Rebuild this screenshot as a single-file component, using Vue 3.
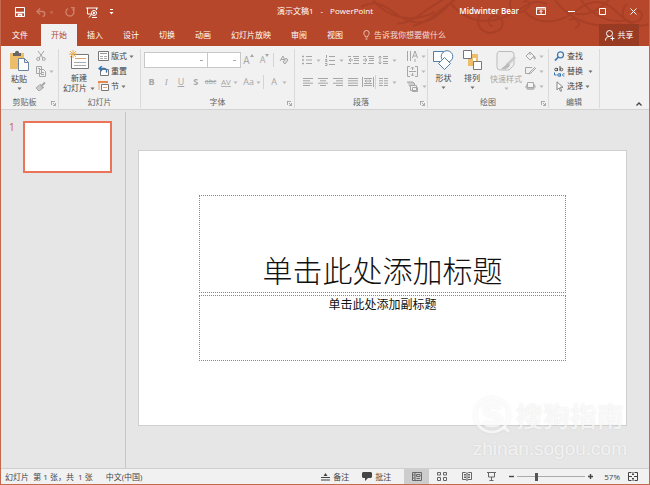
<template>
  <div class="app-window">
    <header class="header">
      <svg class="swirls" width="290" height="46" viewBox="0 0 290 46" fill="none" stroke="#a84027" stroke-width="2" aria-hidden="true">
        <path d="M2 7c22-12 30 8 48 14s34-8 44-21M14 0c12 14 34 26 62 12M38 24C58 22 66 8 84 0M54 26C72 22 84 6 96 0M92 4c14 16 34 22 56 12s24-18 40-12" />
        <path d="M124 10c-12 14 0 26 12 22s8-16 0-16-8 10-2 10M152 0c-4 10 6 16 14 10s4-10-2-8M166 12c14 14 34 12 52-2s30-8 42 4 20 14 30 10" />
        <path d="M196 0c14 20 40 30 66 24M222 0c10 14 26 24 48 20M210 20c8-4 14 6 6 8M250 0c-8 8-18 16-34 14M268 4c-8 8-4 18 6 18s12-10 4-12" />
      </svg>
      <div class="title-bar">
        <div class="quick-access">
          <button title="保存"><Icon name="save" /></button>
          <button class="dim undo" title="撤消"><Icon name="undo" /><Icon name="arrow" /></button>
          <button class="dim" title="重复"><Icon name="redo" /></button>
          <button title="从头开始"><Icon name="present" /></button>
          <button title="自定义快速访问工具栏"><Icon name="more" /></button>
        </div>
        <div class="doc-title"><span>演示文稿1</span><span>-</span><span>PowerPoint</span></div>
        <div class="window-tools">
          <span class="user">Midwinter Bear</span>
          <button class="display" title="功能区显示选项"><Icon name="ribbon" /></button>
          <button title="最小化"><Icon name="minimize" /></button>
          <button title="最大化"><Icon name="maximize" /></button>
          <button title="关闭"><Icon name="close" /></button>
        </div>
      </div>
      <nav class="tabs">
        <button
          v-for="tab in tabs"
          :key="tab"
          class="tab"
          :class="{ active: tab === activeTab }"
          @click="activeTab = tab"
        >
          {{ tab }}
        </button>
        <button class="tell-me"><Icon name="bulb" />告诉我你想要做什么</button>
        <button class="share"><Icon name="person" />共享</button>
      </nav>
    </header>

    <section class="ribbon">
      <div class="group clipboard">
        <div class="tools">
          <button class="big"><Icon name="paste" />粘贴<Icon name="arrow" /></button>
          <div class="stack off">
            <button title="剪切"><Icon name="cut" /></button>
            <button title="复制"><Icon name="copy" /><Icon name="arrow" /></button>
            <button title="格式刷"><Icon name="brush" /></button>
          </div>
        </div>
        <div class="caption">剪贴板<Icon name="launcher" class="launcher" /></div>
      </div>

      <div class="group slides">
        <div class="tools">
          <button class="big">
            <Icon name="newSlide" />新建
            <span class="line">幻灯片<Icon name="arrow" /></span>
          </button>
          <div class="stack">
            <button><Icon name="layout" />版式<Icon name="arrow" /></button>
            <button><Icon name="reset" />重置</button>
            <button><Icon name="section" />节<Icon name="arrow" /></button>
          </div>
        </div>
        <div class="caption">幻灯片</div>
      </div>

      <div class="group font">
        <div class="tools rows off">
          <div class="row">
            <select class="font-name" aria-label="字体"></select>
            <select class="font-size" aria-label="字号"></select>
            <button class="letter grow" title="增大字号">A<Icon name="up" /></button>
            <button class="letter shrink" title="减小字号">A<Icon name="down" /></button>
            <i class="divider"></i>
            <button class="clear" title="清除格式"><Icon name="eraser" /></button>
          </div>
          <div class="row">
            <button class="letter" title="加粗"><b>B</b></button>
            <button class="letter serif" title="倾斜"><em>I</em></button>
            <button class="letter" title="下划线"><u>U</u></button>
            <button class="letter" title="文字阴影"><b>S</b></button>
            <button class="letter small" title="删除线"><s>abc</s></button>
            <button class="letter wide" title="字符间距"><span class="spacing">AV</span><Icon name="arrow" /></button>
            <button class="letter wide" title="更改大小写">Aa<Icon name="arrow" /></button>
            <i class="divider"></i>
            <button class="letter color" title="字体颜色">A<Icon name="arrow" /></button>
          </div>
        </div>
        <div class="caption">字体<Icon name="launcher" class="launcher" /></div>
      </div>

      <div class="group paragraph">
        <div class="tools off">
          <div class="rows">
            <div class="row">
              <button class="drop" title="项目符号"><Icon name="bullets" /><Icon name="arrow" /></button>
              <button class="drop" title="编号"><Icon name="numbers" /><Icon name="arrow" /></button>
              <button class="plain" title="降低列表级别"><Icon name="outdent" /></button>
              <button class="plain" title="提高列表级别"><Icon name="indent" /></button>
              <button class="drop" title="行距"><Icon name="lineSpacing" /><Icon name="arrow" /></button>
            </div>
            <div class="row">
              <button class="plain" title="左对齐"><Icon name="left" /></button>
              <button class="plain" title="居中"><Icon name="center" /></button>
              <button class="plain" title="右对齐"><Icon name="right" /></button>
              <button class="plain" title="两端对齐"><Icon name="justify" /></button>
              <button class="plain" title="分散对齐"><Icon name="distribute" /></button>
              <i class="divider"></i>
              <button class="drop" title="分栏"><Icon name="columns" /><Icon name="arrow" /></button>
            </div>
          </div>
          <div class="stack">
            <button title="文字方向"><Icon name="direction" /><Icon name="arrow" /></button>
            <button title="对齐文本"><Icon name="alignText" /><Icon name="arrow" /></button>
            <button title="转换为 SmartArt"><Icon name="smartArt" /><Icon name="arrow" /></button>
          </div>
        </div>
        <div class="caption">段落<Icon name="launcher" class="launcher" /></div>
      </div>

      <div class="group drawing">
        <div class="tools">
          <button class="big"><Icon name="shapes" />形状<Icon name="arrow" /></button>
          <button class="big"><Icon name="arrange" />排列<Icon name="arrow" /></button>
          <button class="big off"><Icon name="styles" />快速样式<Icon name="arrow" /></button>
          <div class="stack off">
            <button title="形状填充"><Icon name="fill" /><Icon name="arrow" /></button>
            <button title="形状轮廓"><Icon name="outline" /><Icon name="arrow" /></button>
            <button title="形状效果"><Icon name="effects" /><Icon name="arrow" /></button>
          </div>
        </div>
        <div class="caption">绘图<Icon name="launcher" class="launcher" /></div>
      </div>

      <div class="group editing">
        <div class="tools">
          <div class="stack">
            <button><Icon name="find" />查找</button>
            <button><Icon name="replace" />替换<Icon name="arrow" class="far" /></button>
            <button><Icon name="select" />选择<Icon name="arrow" /></button>
          </div>
        </div>
        <div class="caption">编辑</div>
      </div>
      <button class="collapse" title="折叠功能区"><Icon name="collapse" /></button>
    </section>

    <main class="workspace">
      <aside class="thumbnails">
        <span class="number">1</span>
        <button class="thumb" title="幻灯片 1"></button>
      </aside>
      <div class="stage">
        <div class="slide">
          <h1 class="placeholder title">单击此处添加标题</h1>
          <p class="placeholder subtitle">单击此处添加副标题</p>
        </div>
        <div class="watermark">
          <div class="brand"><Icon name="sogou" />搜狗指南</div>
          <div class="site">zhinan.sogou.com</div>
        </div>
      </div>
    </main>

    <footer class="status-bar">
      <span>幻灯片&nbsp; 第 1 张，共&nbsp; 1 张</span>
      <span class="language">中文(中国)</span>
      <div class="status-tools">
        <button class="note"><Icon name="notes" />备注</button>
        <button class="note"><Icon name="comment" />批注</button>
        <button
          v-for="view in views"
          :key="view.icon"
          class="view"
          :class="{ current: view.icon === currentView }"
          :title="view.label"
          @click="currentView = view.icon"
        >
          <Icon :name="view.icon" />
        </button>
        <div class="zoom">
          <button title="缩小" @click="zoom--"><Icon name="minus" /></button>
          <input v-model.number="zoom" type="range" min="10" max="180" aria-label="缩放">
          <button title="放大" @click="zoom++"><Icon name="plus" /></button>
        </div>
        <span class="percent">{{ zoom }}%</span>
        <button class="fit" title="使幻灯片适应当前窗口"><Icon name="fit" /></button>
      </div>
    </footer>
  </div>
</template>

<script setup>
import { h, ref } from 'vue';

const tabs = ['文件', '开始', '插入', '设计', '切换', '动画', '幻灯片放映', '审阅', '视图'];
const activeTab = ref('开始');

const views = [
  { icon: 'normal', label: '普通视图' },
  { icon: 'sorter', label: '幻灯片浏览' },
  { icon: 'reading', label: '阅读视图' },
  { icon: 'show', label: '幻灯片放映' }
];
const currentView = ref('normal');
const zoom = ref(57);

// name: [width, height, svg content]
const icons = {
  arrow: [5, 3, '<path d="M.5.5h4L2.500 3z" fill="currentColor" stroke="none" opacity=".75"/>'],
  up: [5, 4, '<path d="M0 3l2-3 2 3z" fill="currentColor" stroke="none"/>'],
  down: [5, 4, '<path d="M0 0h4L2 3z" fill="currentColor" stroke="none"/>'],
  save: [10, 10, '<path d="M.5.5h9v9h-9z"/><path d="M1 5.500h8M3.500 9V7.500h3V9" stroke-width="1.500"/>'],
  undo: [10, 9, '<path d="M4 .5L1 3.500l3 3M1 3.500h5.500c3 0 3 5 0 5" stroke-width="1.400"/>'],
  redo: [10, 10, '<path d="M3 1.500A4 4 0 1 0 7.500 2M6 .5h3v3" stroke-width="1.400"/>'],
  present: [12, 11, '<path d="M0 1h12M1.500 1v6h4M10.500 1v2M3 10.500l2.500-3"/><circle cx="8" cy="6" r="2.500"/><path d="M7.500 5v2l1.500-1zM6 10.500h5"/>'],
  more: [5, 6, '<path d="M1 .5h3"/><path d="M.5 3h4L2.500 5.500z" fill="currentColor" stroke="none"/>'],
  ribbon: [10, 8, '<path d="M.5.5h9v7h-9zM.5 2h9M5 7V3.500M3.500 5L5 3.500 6.500 5"/>'],
  minimize: [7, 7, '<path d="M0 3.500h7"/>'],
  maximize: [7, 7, '<path d="M.5.5h6v6h-6z"/>'],
  close: [7, 7, '<path d="M.5.5l6 6M6.500.5l-6 6"/>'],
  bulb: [7, 10, '<path d="M2.500 7C2.500 5.500.8 5 .8 3.200a2.700 2.700 0 0 1 5.400 0C6.200 5 4.500 5.500 4.500 7zM2.500 9h2" stroke-width=".8"/>'],
  person: [10, 11, '<circle cx="4.500" cy="3.500" r="3"/><path d="M.5 10.500C.5 8 2 6.500 4.500 6.500M7.500 6.500v4M5.500 8.500h4"/>'],
  paste: [20, 21, '<path d="M1 3h14v16H1z" fill="#edbd69" stroke="none"/><path d="M4 3h2c0-3 4-3 4 0h2v3H4z" fill="#666" stroke="none"/><path d="M9.500 8.500h6l4 4v8h-10zM15.500 8.500v4h4" fill="#fff" stroke="#6c86a0"/>'],
  cut: [10, 10, '<path d="M2 0l5 7M8 0L3 7"/><circle cx="2.200" cy="8" r="1.500"/><circle cx="7.800" cy="8" r="1.500"/>'],
  copy: [10, 11, '<path d="M.5.5h5v7h-5zM3.500 3.500h4l2 2v5h-6zM5 6.500h3M5 8.500h3M2 2.500h2" fill="#f1f1f1"/>'],
  brush: [10, 9, '<path d="M9 .5L6 3.500" stroke-width="2"/><path d="M4 2l4 4M3.500 3L0 6l3 3 4-3z" fill="#ccc"/>'],
  newSlide: [20, 20, '<path d="M2.500 4.500h17v14h-17z" fill="#fff" stroke="#777"/><path d="M6 8.500h11" stroke="#e0a070"/><path d="M5 12.500h12M5 15.500h12" stroke="#aaa"/><path d="M4 0v8M0 4h8M1 1l6 6M7 1L1 7" stroke="#edae55"/>'],
  layout: [11, 10, '<path d="M.5.5h10v9H.5z" fill="#fff" stroke="#777"/><path d="M2 2.500h7" stroke="#999"/><path d="M2 5.500h3M6 5.500h3M2 7.500h3M6 7.500h3" stroke="#aaa"/>'],
  reset: [11, 10, '<path d="M2.500 3.500h8v6h-8z" fill="#fff" stroke="#777"/><path d="M4 0L1 2.500 4 5M1 2.500h5c3 0 3 3 2 4" stroke="#3674ae" stroke-width="1.300"/>'],
  section: [11, 10, '<path d="M0 1h10" stroke="#e58a4c" stroke-width="2"/><path d="M3.500 3.500h7v6h-7z" fill="#fff" stroke="#777"/><path d="M1 2v7M5 6.500h4" stroke="#e2a777"/>'],
  eraser: [10, 11, '<path d="M1 6l3-5 2 5M2 4.500h3"/><path d="M4 7l3-4 2 2-3 4z" fill="#ddd"/>'],
  bullets: [10, 10, '<path d="M0 1.500h2M0 5h2M0 8.500h2" stroke-width="1.500"/><path d="M4 1.500h6M4 5h6M4 8.500h6"/>'],
  numbers: [10, 11, '<path d="M1.500 0v3M0 4.500h2L.5 6.500h2M0 8.500h2v2H0"/><path d="M4 1.500h6M4 5.500h6M4 9.500h6"/>'],
  outdent: [11, 8, '<path d="M0 .5h3M5 .5h6M6 2.500h5M6 4.500h5M0 7.500h3M5 7.500h6M5 4H1M3 2L1 4l2 2"/>'],
  indent: [11, 8, '<path d="M0 .5h3M5 .5h6M6 2.500h5M6 4.500h5M0 7.500h3M5 7.500h6M0 4h4M2 2l2 2-2 2"/>'],
  lineSpacing: [10, 10, '<path d="M2 1v8M.5 2.500L2 1l1.500 1.500M.5 7.500L2 9l1.500-1.500M5 1.500h5M5 3.500h5M5 6.500h5M5 8.500h5"/>'],
  left: [10, 8, '<path d="M0 .5h10M0 2.800h7M0 5.200h10M0 7.500h7"/>'],
  center: [10, 8, '<path d="M0 .5h10M2 2.800h6M0 5.200h10M2 7.500h6"/>'],
  right: [10, 8, '<path d="M0 .5h10M3 2.800h7M0 5.200h10M3 7.500h7"/>'],
  justify: [10, 8, '<path d="M0 .5h10M0 2.800h10M0 5.200h10M0 7.500h10"/>'],
  distribute: [12, 10, '<path d="M.5 0v10M11.500 0v10M2 1.500h8M2 8.500h8M2 6.500h8M3 4h6M4.500 2.500L3 4l1.500 1.500M7.500 2.500L9 4 7.500 5.500"/>'],
  columns: [9, 8, '<path d="M0 .5h4M5 .5h4M0 2.800h4M5 2.800h4M0 5.200h4M5 5.200h4M0 7.500h4M5 7.500h4"/>'],
  direction: [11, 11, '<path d="M.5 0v10M3.500 0v10M5.500 7L8 0l2.500 7M6.500 5h3M8 8v3"/>'],
  alignText: [11, 11, '<path d="M3 .5H.5v10H3M8 .5h2.500v10H8M2 5.500h7M5.500 1v3M4 2.500L5.500 1 7 2.500M5.500 7v3M4 8.500L5.500 10 7 8.500"/>'],
  smartArt: [12, 11, '<path d="M0 1h6l2 2-2 2H2" fill="#ccc"/><path d="M3.500 4.500h6v5h-6zM5.500 6.500h5v4h-5z" fill="#f1f1f1"/>'],
  shapes: [21, 20, '<path d="M.5 1.500h10v10H.5z" fill="#fff" stroke="#527fa5"/><circle cx="14" cy="6.500" r="5.800" fill="#fff" stroke="#527fa5"/><path d="M11.500 7.500l6 6-6 6-6-6z" fill="#fff" stroke="#527fa5"/>'],
  arrange: [19, 20, '<path d="M5 4h10v12H5z" fill="#edbd69" stroke="none"/><path d="M.5.5h8v8h-8zM10.500 11.500h8v8h-8z" fill="#fff" stroke="#777"/><path d="M10 8h3v3h-3z" fill="#fff" stroke="none"/>'],
  styles: [20, 21, '<path d="M3 1.500h12a3 3 0 0 1 3 3V15l-5 5H4a3 3 0 0 1-3-3V4a3 3 0 0 1 2-2.500z" fill="#eee" stroke="#bbb"/><path d="M19 7l-8 8" stroke="#ccc" stroke-width="3"/><path d="M12 13l-7 6c5 1 8-1 9-4z" fill="#bbb" stroke="none"/>'],
  fill: [11, 10, '<path d="M1 5l4-4 4 4-4 4zM5 1v3"/><path d="M9 5c3 3 0 4 0 2z" fill="#bbb"/>'],
  outline: [11, 10, '<path d="M7 1.500H.5v6H5M10 1L5 6 4 8l2-1 5-5"/>'],
  effects: [11, 9, '<path d="M2.500 1.500h6l2 3-2 3h-6L.5 5z" fill="#bbb" stroke="#bbb"/><path d="M2.500.5h6v5h-6z" fill="#f4f4f4"/>'],
  find: [10, 10, '<circle cx="6" cy="3.800" r="3" stroke="#3f79af" stroke-width="1.300"/><path d="M3.800 6L.5 9.500" stroke="#3f79af" stroke-width="1.800"/>'],
  replace: [11, 11, '<g stroke="#555"><circle cx="2" cy="3.500" r="1.300"/><path d="M3.500 2v3M6 0v5"/><circle cx="7.500" cy="3.500" r="1.300"/></g><g stroke="#3674ae"><circle cx="5" cy="9" r="1.300"/><path d="M6.500 7.500v3M10.500 8c-2-1-3 2-.3 2.200M.5 6.500v2.500h2"/></g>'],
  select: [8, 11, '<path d="M1.500.8v8l2-2 1.500 3.500 1.200-.6L4.800 6.300h2.700z" fill="#fff" stroke="#777" stroke-width=".9"/>'],
  launcher: [5, 5, '<path d="M0 .5h4M.5 0v4M2 2l2.500 2.500M4.500 2v2.500H2" stroke="#999" stroke-width=".8"/>'],
  collapse: [6, 4, '<path d="M.5 3.500L3 1l2.500 2.500" stroke-width="1.400"/>'],
  notes: [9, 8, '<path d="M0 4.500h9M0 7h9"/><path d="M2.500 3h4l-2-3z" fill="currentColor" stroke="none"/>'],
  comment: [10, 9, '<path d="M1 0h8l1 1v4L9 6H6L3 9V6H1L0 5V1z" fill="currentColor" stroke="none"/>'],
  normal: [10, 9, '<path d="M.5.5h9v8h-9zM3 .5v8M4.500 2.500h3.500v2H4.500zM4.500 6.500H8M1 3h2M1 6h2"/>'],
  sorter: [10, 9, '<path d="M.5.5h3v2.500h-3zM6.500.5h3v2.500h-3zM.5 5.500h3v3h-3zM6.500 5.500h3v3h-3z"/>'],
  reading: [10, 9, '<path d="M5 1.500L3.500.5h-3v7H4l1 1 1-1h3.500v-7h-3zM5 1.500v7"/><path d="M2 2.500h2M2 4h2M2 5.500h2M6 2.500h2M6 4h2M6 5.500h2"/>'],
  show: [9, 9, '<path d="M0 .5h9M1.500 1v4h6V1M4.500 5v3M2.500 8.500h4"/>'],
  minus: [5, 5, '<path d="M0 2.500h5" stroke-width="1.400"/>'],
  plus: [5, 5, '<path d="M0 2.500h5M2.500 0v5" stroke-width="1.400"/>'],
  fit: [10, 9, '<path d="M3.500.5h-3v8h3M6.500.5h3v8h-3M5 0v3M5 6v3M1 4.500h3M6 4.500h3M4 2l1 1 1-1M4 7l1-1 1 1"/>'],
  sogou: [40, 40, '<circle cx="19" cy="19" r="17" stroke-width="3"/><path d="M27 12c-4-4-15-4-15 2s15 4 15 10-12 6-16 2" stroke-width="5"/><path d="M31 31l5 5" stroke-width="3"/>']
};

const Icon = (props) => {
  const [width, height, innerHTML] = icons[props.name];
  return h('svg', {
    width,
    height,
    viewBox: `0 0 ${width} ${height}`,
    fill: 'none',
    stroke: 'currentColor',
    'aria-hidden': 'true',
    innerHTML
  });
};
Icon.props = ['name'];
</script>

<style>
body {
  margin: 0;
}
</style>

<style scoped>
.app-window {
  display: flex;
  flex-direction: column;
  min-height: 100vh;
  box-sizing: border-box;
  border: 1px solid #c4694d;
  border-top: none;
  background: #e6e6e6;
  color: #444;
  font: 8px/12px "Open Sans", "Noto Sans CJK SC", sans-serif;
}

button {
  display: flex;
  align-items: center;
  justify-content: center;
  padding: 0;
  border: none;
  background: none;
  color: inherit;
  font: inherit;
  white-space: nowrap;
}

svg {
  flex: none;
}

/* header */
.header {
  position: relative;
  background: #b7472a;
  color: #fff;
}

.swirls {
  position: absolute;
  top: 0;
  right: 0;
}

.title-bar {
  position: relative;
  display: grid;
  grid-template-columns: 1fr auto 1fr;
  align-items: center;
  height: 22px;
}

.quick-access {
  display: flex;
  gap: 11px;
  padding: 2px 0 0 14px;
}

.quick-access .undo {
  gap: 3px;
}

.dim {
  opacity: 0.3;
}

.doc-title {
  display: flex;
  gap: 7px;
}

.window-tools {
  display: flex;
  justify-content: flex-end;
  align-items: center;
}

.window-tools button {
  width: 31px;
  height: 22px;
}

.user {
  margin-right: 6px;
  font-weight: 600;
}

.tabs {
  position: relative;
  display: flex;
  height: 22px;
  padding-top: 2px;
}

.tab {
  padding: 0 10px;
}

.tab:first-child {
  padding: 0 13px 0 11px;
}

.tab.active {
  background: #f1f1f1;
  color: #b7472a;
}

.tell-me {
  gap: 4px;
  padding-left: 10px;
  color: #f6dcd4;
}

.share {
  gap: 3px;
  width: 40px;
  margin-left: auto;
  margin-right: 10px;
  background: #983b22;
}

/* ribbon */
.ribbon {
  display: flex;
  height: 63px;
  border-bottom: 1px solid #d2d2d2;
  background: #f1f1f1;
}

.group {
  display: flex;
  flex-direction: column;
  box-sizing: border-box;
  margin: 3px 0 1px;
  border-right: 1px solid #dadada;
}

.tools {
  display: flex;
  flex: 1;
  padding-top: 1px;
}

.caption {
  position: relative;
  height: 12px;
  color: #666;
  text-align: center;
}

.launcher {
  position: absolute;
  right: 2px;
  bottom: 2px;
}

.big {
  flex-direction: column;
  justify-content: flex-start;
  height: 44px;
  line-height: 10px;
}

.big > svg:first-child {
  margin-bottom: 3px;
}

.big > .line {
  display: flex;
  align-items: center;
  gap: 3px;
}

.big > svg:last-child {
  margin-top: 3px;
}

.stack {
  display: flex;
  flex-direction: column;
  gap: 3px;
}

.stack button {
  justify-content: flex-start;
  gap: 3px;
  height: 12px;
}

.off {
  color: #a6a6a6;
}

.rows {
  display: flex;
  flex-direction: column;
  gap: 6px;
}

.row {
  display: flex;
  align-items: center;
  height: 16px;
}

.divider {
  width: 1px;
  height: 14px;
  background: #d4d4d4;
}

.clipboard {
  width: 58px;
}

.clipboard .tools {
  gap: 7px;
  padding-left: 8px;
}

.clipboard .caption {
  padding-right: 10px;
}

.slides {
  width: 82px;
}

.slides .tools {
  gap: 3px;
  padding-left: 4px;
}

.slides .stack button {
  gap: 2px;
}

.font {
  width: 154px;
}

.font .tools {
  padding: 3px 0 0 3px;
}

select {
  height: 16px;
  border: 1px solid #c8c8c8;
  border-radius: 0;
  appearance: none;
  background: linear-gradient(#aaa, #aaa) right 4px center / 3px 1px no-repeat #fff;
  font: inherit;
}

.font-name {
  width: 64px;
}

.font-size {
  width: 34px;
  margin-left: -1px;
}

.letter {
  width: 15px;
  font-size: 9px;
}

.letter.grow,
.letter.shrink {
  align-items: flex-start;
  width: 16px;
}

.letter.grow {
  font-size: 10px;
}

.letter.small {
  font-size: 7px;
}

.letter.wide {
  gap: 2px;
  width: 23px;
}

.letter.color {
  gap: 5px;
  width: 30px;
}

.letter.serif {
  font-family: "Liberation Serif", serif;
}

.spacing {
  border-bottom: 1px solid #b4b4b4;
  font-size: 8px;
  line-height: 9px;
}

.clear {
  width: 20px;
}

.paragraph {
  width: 133px;
}

.paragraph .tools {
  gap: 6px;
  padding-left: 5px;
}

.paragraph .rows {
  width: 102px;
  padding-top: 2px;
}

.drop {
  gap: 4px;
  width: 23px;
}

.plain {
  width: 15px;
}

.drawing {
  width: 121px;
}

.drawing .tools {
  gap: 8px;
  padding-left: 5px;
}

.drawing .big {
  min-width: 20px;
}

.drawing .stack {
  margin-left: -5px;
}

.editing {
  width: 51px;
}

.editing .tools {
  padding-left: 5px;
}

.editing .stack button {
  gap: 2px;
}

.editing .stack svg:first-child {
  width: 11px;
}

.far {
  margin-left: 3px;
}

.collapse {
  align-self: flex-end;
  margin: 0 7px 3px auto;
}

/* workspace */
.workspace {
  display: flex;
  flex: 1;
}

.thumbnails {
  display: flex;
  align-items: flex-start;
  gap: 8px;
  box-sizing: border-box;
  width: 125px;
  margin-top: 2px;
  padding: 9px 13px 0 8px;
  border-right: 1px solid #c3c6ca;
}

.number {
  width: 6px;
  color: #d0593c;
  font-size: 10px;
}

.thumb {
  flex: 1;
  box-sizing: border-box;
  aspect-ratio: 89 / 52;
  border: 2px solid #ea7358;
  background: #fff;
}

.stage {
  position: relative;
  flex: 1;
  padding: 40px 22px 40px 12px;
}

.slide {
  display: flex;
  flex-direction: column;
  gap: 2px;
  box-sizing: border-box;
  aspect-ratio: 489 / 276;
  padding: 9% 60px 13%;
  border: 1px solid #d0d0d0;
  background: #fff;
  color: #111;
}

.placeholder {
  box-sizing: border-box;
  margin: 0;
  border: 1px dotted #888;
  font-family: "Noto Sans CJK SC", sans-serif;
  text-align: center;
}

.title {
  display: flex;
  flex: 98;
  align-items: flex-end;
  justify-content: center;
  padding-bottom: 3px;
  font-size: 30px;
  font-weight: 300;
  line-height: 40px;
}

.subtitle {
  flex: 68;
  font-size: 12px;
  line-height: 16px;
}

.watermark {
  position: absolute;
  right: 22px;
  bottom: 6px;
  color: rgba(255, 255, 255, 0.7);
  text-shadow: 0 0 2px rgba(0, 0, 0, 0.1);
}

.brand {
  display: flex;
  align-items: center;
  gap: 3px;
  font: 500 27px/40px "Noto Sans CJK SC", sans-serif;
}

.brand svg {
  filter: drop-shadow(0 0 1px rgba(0, 0, 0, 0.1));
}

.site {
  font: 19px/26px "Liberation Sans", sans-serif;
}

/* status bar */
.status-bar {
  display: flex;
  align-items: center;
  height: 15px;
  padding-left: 4px;
  border-top: 1px solid #cfcfcf;
  background: #f1f1f1;
}

.language {
  margin-left: 13px;
}

.status-tools {
  display: flex;
  align-items: center;
  margin-left: auto;
}

.note {
  gap: 3px;
  margin-right: 13px;
}

.view {
  width: 25px;
  height: 15px;
  color: #666;
}

.view.current {
  background: #cdcdcd;
}

.zoom {
  display: flex;
  align-items: center;
  gap: 3px;
  margin-left: 5px;
}

.zoom input {
  width: 68px;
  height: 12px;
  margin: 0;
  appearance: none;
  background: linear-gradient(#aaa, #aaa) center / 100% 1px no-repeat;
}

.zoom input::-webkit-slider-thumb {
  width: 3px;
  height: 8px;
  appearance: none;
  background: #555;
}

.percent {
  margin-left: 11px;
}

.fit {
  margin: 0 11px 0 8px;
}
</style>
